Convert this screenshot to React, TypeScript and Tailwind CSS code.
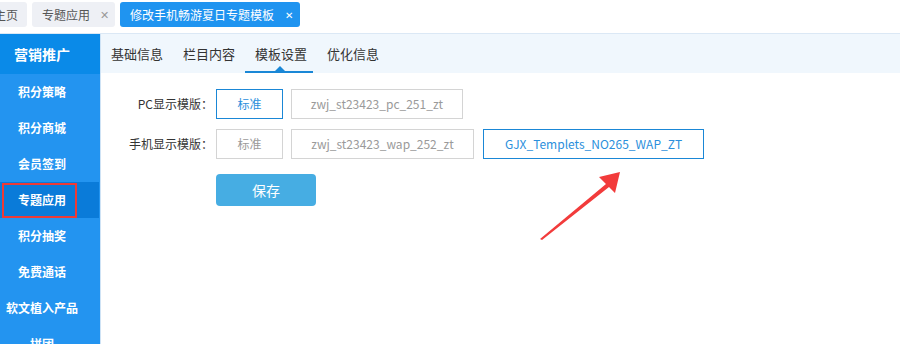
import React from "react";

const font = { fontFamily: '"Noto Sans CJK SC", "Noto Sans", sans-serif' };

const menu = ["积分策略", "积分商城", "会员签到", "专题应用", "积分抽奖", "免费通话", "软文植入产品", "拼团"];
const tabs = ["基础信息", "栏目内容", "模板设置", "优化信息"];

function TopTabs() {
  return (
    <div className="h-[34px] flex items-start gap-[5px] pt-[2px] border-b border-[#dbe8f5] bg-white">
      <div className="h-[25px] -ml-[15px] px-[9px] flex items-center rounded-[3px] bg-[#eef0f5] text-[12px] text-[#555]">
        主页
      </div>
      <div className="h-[25px] w-[83px] pl-[10px] flex items-center rounded-[3px] bg-[#eef0f5] text-[12px] text-[#555]">
        <span>专题应用</span>
        <span className="ml-[10px] text-[11px] text-[#999]">✕</span>
      </div>
      <div className="h-[25px] w-[180px] pl-[10px] flex items-center rounded-[3px] bg-[#1f94f0] text-[12px] text-white">
        <span>修改手机畅游夏日专题模板</span>
        <span className="ml-[11px] text-[10px]">✕</span>
      </div>
    </div>
  );
}

function Sidebar() {
  return (
    <aside className="w-[100px] shrink-0 bg-[#2394f0] flex flex-col overflow-hidden">
      <div className="h-[40px] shrink-0 bg-[#0a8ae8] flex items-center">
        <span className="w-[84px] text-center text-[14px] font-bold text-white">营销推广</span>
      </div>
      {menu.map((m) => {
        const active = m === "专题应用";
        return (
          <div
            key={m}
            className={
              active
                ? "relative h-[36px] w-[99px] shrink-0 bg-[#0a7bd9] flex items-center"
                : "h-[36px] shrink-0 flex items-center"
            }
          >
            <span className="w-[84px] text-center text-[12px] font-bold text-white whitespace-nowrap">{m}</span>
            {active && (
              <div className="absolute left-[2px] top-[1px] w-[75px] h-[35px] border-2 border-[#ee3a36]" />
            )}
          </div>
        );
      })}
    </aside>
  );
}

function Field({ text, w, kind }: { text: string; w: string; kind: "blue" | "gray" }) {
  return (
    <div
      className={
        kind === "blue"
          ? `${w} h-[30px] border border-[#1a87d6] flex items-center justify-center text-[12px] text-[#2b8fdc]`
          : `${w} h-[30px] border border-[#d4d4d4] flex items-center justify-center text-[12px] text-[#9a9a9a]`
      }
    >
      {text}
    </div>
  );
}

export default function App() {
  return (
    <div className="w-[900px] h-[344px] overflow-hidden bg-white" style={font}>
      <TopTabs />
      <div className="flex h-[310px]">
        <Sidebar />
        <main className="relative flex-1 border-l border-[#cfe3f5]">
          <div className="h-[39px] bg-[#f0f7fd] flex items-stretch">
            {tabs.map((t) => (
              <div key={t} className="relative w-[72px] flex items-center pl-[10px] text-[13px] text-[#333]">
                {t}
                {t === "模板设置" && (
                  <>
                    <div className="absolute left-0 right-[4px] bottom-0 h-[2px] bg-[#1a87d6]" />
                    <div className="absolute left-[30px] bottom-[2px] w-0 h-0 border-l-[5px] border-r-[5px] border-b-[5px] border-l-transparent border-r-transparent border-b-[#1a87d6]" />
                  </>
                )}
              </div>
            ))}
          </div>
          <div className="pt-[16px] flex flex-col gap-[10px]">
            <div className="flex items-center gap-[8px]">
              <div className="w-[112px] -mr-[5px] text-right text-[12px] text-[#333]">PC显示模版：</div>
              <Field text="标准" w="w-[67px]" kind="blue" />
              <Field text="zwj_st23423_pc_251_zt" w="w-[172px]" kind="gray" />
            </div>
            <div className="flex items-center gap-[8px]">
              <div className="w-[112px] -mr-[5px] text-right text-[12px] text-[#333]">手机显示模版：</div>
              <Field text="标准" w="w-[67px]" kind="gray" />
              <Field text="zwj_st23423_wap_252_zt" w="w-[183px]" kind="gray" />
              <div className="ml-[1px]">
                <Field text="GJX_Templets_NO265_WAP_ZT" w="w-[221px]" kind="blue" />
              </div>
            </div>
            <div className="pl-[115px] pt-[5px]">
              <button className="w-[100px] h-[32px] rounded-[4px] bg-[#46ade3] text-white text-[14px]">保存</button>
            </div>
          </div>
          <svg className="absolute left-[437px] top-[126px]" width="90" height="80" viewBox="0 0 90 80">
            <polygon points="2,79 68,24 61,17 82,12 77,33 71,27 4,80" fill="#f23b3b" />
          </svg>
        </main>
      </div>
    </div>
  );
}
